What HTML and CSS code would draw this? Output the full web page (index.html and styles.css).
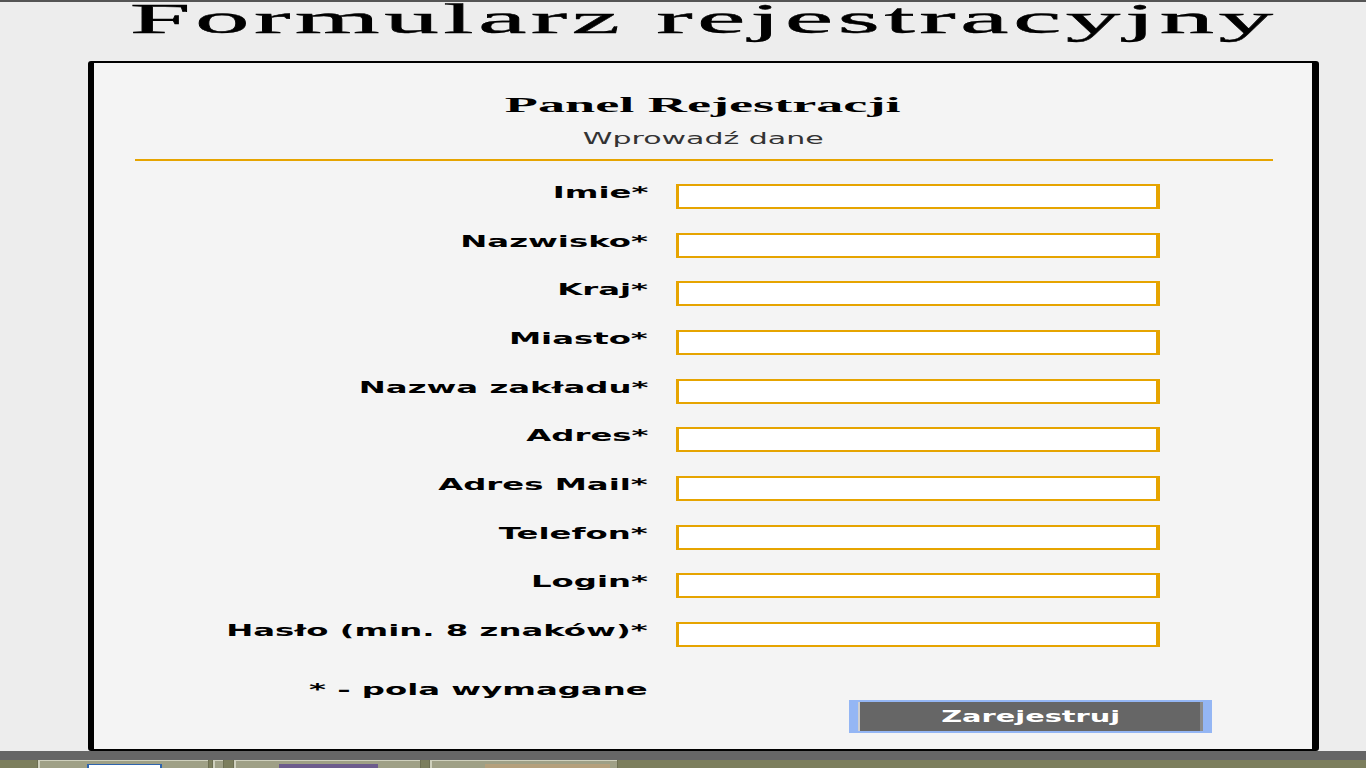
FILE: index.html
```html
<!DOCTYPE html>
<html lang="pl">
<head>
<meta charset="utf-8">
<title>Formularz rejestracyjny</title>
<link rel="stylesheet" href="styles.css">
</head>
<body>
<div class="topline"></div>
<div class="wrap">
  <h1 class="title"><span>Formularz rejestracyjny</span></h1>
  <form class="panel">
    <h2 class="panel-title"><span>Panel Rejestracji</span></h2>
    <p class="panel-sub"><span>Wprowadź dane</span></p>
    <div class="sep"></div>
    <div class="fields">
      <div class="row"><label class="lbl"><span>Imie*</span></label><input class="field" type="text"></div>
      <div class="row"><label class="lbl"><span>Nazwisko*</span></label><input class="field" type="text"></div>
      <div class="row"><label class="lbl"><span>Kraj*</span></label><input class="field" type="text"></div>
      <div class="row"><label class="lbl"><span>Miasto*</span></label><input class="field" type="text"></div>
      <div class="row"><label class="lbl"><span>Nazwa zakładu*</span></label><input class="field" type="text"></div>
      <div class="row"><label class="lbl"><span>Adres*</span></label><input class="field" type="text"></div>
      <div class="row"><label class="lbl"><span>Adres Mail*</span></label><input class="field" type="text"></div>
      <div class="row"><label class="lbl"><span>Telefon*</span></label><input class="field" type="text"></div>
      <div class="row"><label class="lbl"><span>Login*</span></label><input class="field" type="text"></div>
      <div class="row"><label class="lbl"><span>Hasło (min. 8 znaków)*</span></label><input class="field" type="password"></div>
    </div>
    <div class="foot">
      <div class="lbl"><span>* - pola wymagane</span></div>
      <button class="btn" type="button"><span>Zarejestruj</span></button>
    </div>
  </form>
</div>
<div class="band"></div>
<div class="tasks">
  <div class="task t1"><i class="peek blue"></i></div>
  <div class="task t2"></div>
  <div class="task t3"><i class="peek purple"></i></div>
  <div class="task t4"><i class="peek tan"></i></div>
</div>
</body>
</html>
```

FILE: styles.css
```css
* { box-sizing: border-box; }
html, body { margin: 0; height: 100%; }
body {
  background: #ededed;
  overflow: hidden;
  font-family: "DejaVu Sans", Verdana, sans-serif;
  color: #000;
}
.topline { height: 2px; background: #555; }
.wrap { margin-left: 88px; width: 1231px; }

.title {
  margin: 0 0 25px;
  height: 34px;
  text-align: center;
  font: normal 42px/34px "Liberation Serif", "Times New Roman", serif;
  white-space: nowrap;
}
.title span {
  display: inline-block;
  letter-spacing: 1.7px;
  transform: scaleX(2.6);
  -webkit-text-stroke: 0.4px #000;
}

.panel {
  display: block;
  margin: 0;
  height: 690px;
  background: #f4f4f4;
  border-style: solid;
  border-color: #000;
  border-width: 2px 7px 2px 6px;
  border-radius: 3px;
  padding-top: 30px;
}
.panel-title {
  margin: 0;
  text-align: center;
  font: bold 21px/24px "Liberation Serif", "Times New Roman", serif;
  white-space: nowrap;
}
.panel-title span { display: inline-block; transform: scaleX(2.58); }
.panel-sub {
  margin: 12px 0 0;
  text-align: center;
  font-size: 15px;
  line-height: 20px;
  color: #333;
  white-space: nowrap;
}
.panel-sub span { display: inline-block; transform: scaleX(2.0); }
.sep { height: 2px; background: #e6a400; margin: 10px 39px 0 41px; }

.fields {
  display: flex;
  flex-direction: column;
  gap: 23.67px;
  margin-top: 23px;
}
.row { display: flex; align-items: flex-start; height: 25px; }
.lbl {
  width: 554px;
  flex: none;
  text-align: right;
  font-weight: bold;
  font-size: 16px;
  line-height: 17px;
  white-space: nowrap;
}
.lbl span { display: inline-block; transform: scaleX(2.02); transform-origin: right center; }
.field {
  margin: 0 0 0 28px;
  width: 484px;
  height: 25px;
  padding: 0;
  border-style: solid;
  border-color: #e6a400;
  border-width: 2px 4px 2px 3px;
  background: #fff;
  outline: none;
}

.foot { display: flex; align-items: flex-start; margin-top: 34px; }
.btn {
  margin: 19px 0 0 201px;
  width: 363px;
  height: 33px;
  padding: 0;
  border-style: solid;
  border-color: #94b6f4;
  border-width: 2px 9px;
  background: #666;
  box-shadow: inset 2px 0 0 #cfcfcf, inset -3px 0 0 #8c8c8c;
  color: #fff;
  font: bold 16px/29px "DejaVu Sans", Verdana, sans-serif;
  white-space: nowrap;
}
.btn span { display: inline-block; transform: scaleX(1.8); }

.band { height: 9px; background: #666; }
.tasks {
  height: 8px;
  background: #7c7e5d;
  display: flex;
  padding-left: 37px;
  overflow: hidden;
}
.task {
  height: 8px;
  flex: none;
  background: #9fa086;
  border-left: 1px solid #6d6f52;
  border-right: 1px solid #6d6f52;
  box-shadow: inset 2px 1px 0 #cfd0bd;
  padding-top: 4px;
}
.t1 { width: 172px; }
.t2 { width: 12px; margin-left: 3px; }
.t3 { width: 188px; margin-left: 9px; }
.t4 { width: 189px; margin-left: 8px; }
.peek { display: block; height: 4px; }
.blue { width: 75px; margin-left: 49px; background: #fff; border-top: 1px solid #2e64ae; border-left: 2px solid #2e64ae; border-right: 2px solid #2e64ae; }
.purple { width: 99px; margin-left: 45px; background: #6d5c8d; }
.tan { width: 125px; margin-left: 55px; background: #b5a07c; }
```
